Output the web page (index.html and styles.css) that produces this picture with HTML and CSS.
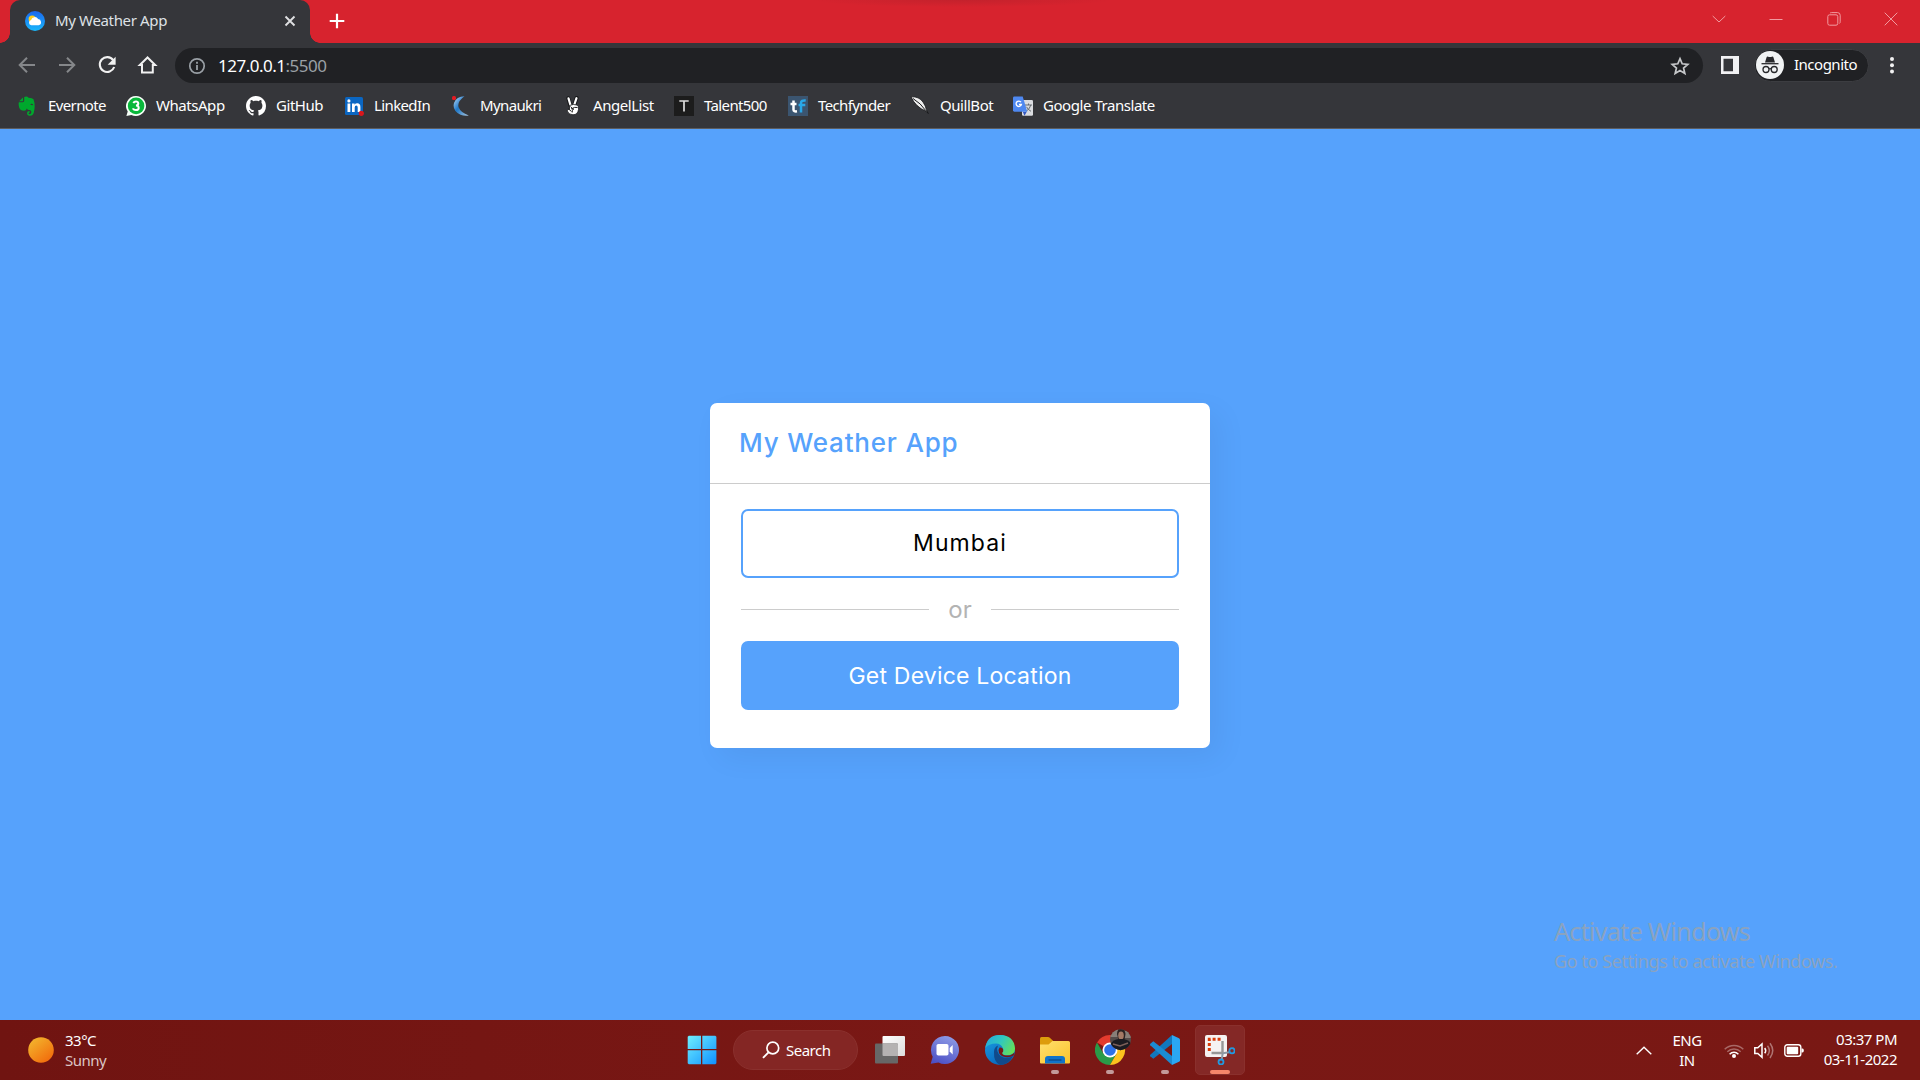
FILE: index.html
```html
<!DOCTYPE html>
<html lang="en">
<head>
<meta charset="utf-8">
<title>My Weather App</title>
<link rel="stylesheet" href="styles.css">
</head>
<body>
<div class="screen">
  <header class="browser">
    <div class="tabstrip">
      <div class="tab">
        <svg class="tab-icon" viewBox="0 0 20 20"><defs><linearGradient id="sky" x2="0" y2="1"><stop stop-color="#1b67ee"/><stop offset="1" stop-color="#19b8fb"/></linearGradient></defs><circle cx="10" cy="10" r="10" fill="url(#sky)"/><circle cx="7.200" cy="8" r="3.600" fill="#ffce1f"/><path d="M6.300 14.200a2.700 2.700 0 0 1-.2-5.300 3.800 3.800 0 0 1 7-.8 3.100 3.100 0 0 1 .6 6.100z" fill="#fff"/></svg>
        <span class="tab-title">My Weather App</span>
        <svg class="tab-close" viewBox="0 0 12 12"><path d="M1.500 1.500l9 9M10.500 1.500l-9 9" stroke="#dfe0e2" stroke-width="1.900"/></svg>
      </div>
      <svg class="new-tab" viewBox="0 0 16 16"><path d="M8 .7v14.600M.7 8h14.600" stroke="#fff" stroke-width="2.200"/></svg>
      <div class="window-controls">
        <svg viewBox="0 0 14 14"><path d="M.7 4l6.300 6 6.300-6"/></svg>
        <svg viewBox="0 0 14 14"><path d="M.5 7.500h13"/></svg>
        <svg viewBox="0 0 14 14"><rect x=".8" y="2.800" width="10" height="10.400" rx="1.800"/><path d="M3 1.200Q3.400.6 4.500.6H10.500Q13.200.6 13.200 3.300V9.800Q13.200 11 12.400 11.500"/></svg>
        <svg viewBox="0 0 14 14"><path d="M.7.7l12.600 12.600M13.300.7L.7 13.300"/></svg>
      </div>
    </div>
    <div class="toolbar">
      <div class="nav">
        <svg viewBox="0 0 24 24"><path d="M20 12H4.800M12 4.700L4.700 12l7.300 7.300" fill="none" stroke="#85878a" stroke-width="2"/></svg>
        <svg viewBox="0 0 24 24"><path d="M4 12h15.200M12 4.700l7.300 7.300-7.300 7.300" fill="none" stroke="#85878a" stroke-width="2"/></svg>
        <svg viewBox="0 0 24 24"><path d="M18.200 7.200A7.400 7.400 0 1 0 19.200 14" fill="none" stroke="#f1f1f1" stroke-width="2.100"/><path d="M20.600 3.800v8h-8z" fill="#f1f1f1"/></svg>
        <svg viewBox="0 0 24 24"><path d="M12.500 4.500l-7.700 7.500h2.200v7.500h10.800v-7.500h2.400z" fill="none" stroke="#f1f1f1" stroke-width="2"/></svg>
      </div>
      <div class="omnibox">
        <svg class="info" viewBox="0 0 18 18"><circle cx="9" cy="9" r="7.200" fill="none" stroke="#9aa0a6" stroke-width="1.700"/><path d="M9 8v5M9 4.700v2" stroke="#9aa0a6" stroke-width="1.800"/></svg>
        <span class="url"><span class="host">127.0.0.1</span><span class="port">:5500</span></span>
        <svg class="star" viewBox="0 0 20 20"><path d="M10 2.600l2.200 5.200 5.600.500-4.250 3.700 1.300 5.500L10 14.600l-4.850 2.900 1.300-5.500L2.200 8.300l5.600-.500z" fill="none" stroke="#c6c8ca" stroke-width="1.700"/></svg>
      </div>
      <svg class="panel" viewBox="0 0 18 18"><path fill-rule="evenodd" d="M0 0h18v18H0zM2.500 2.700v12.600h9.500V2.700z" fill="#f1f1f3"/></svg>
      <div class="profile">
        <svg class="spy" viewBox="0 0 28 28"><circle cx="14" cy="14" r="14" fill="#f1f3f4"/><path d="M9 11.500l1.500-5q.4-1.200 1.600-.8 1.900.6 3.800 0 1.200-.4 1.600.8l1.500 5z" fill="#28292c"/><path d="M5.500 12.700h17" stroke="#28292c" stroke-width="1.300"/><g fill="none" stroke="#28292c" stroke-width="1.300"><circle cx="10" cy="18.500" r="3"/><circle cx="18.200" cy="18.500" r="3"/><path d="M13 18q1.100-.8 2.200 0"/></g></svg>
        <span class="profile-name">Incognito</span>
      </div>
      <svg class="menu" viewBox="0 0 6 18"><g fill="#f1f1f1"><circle cx="3" cy="3" r="2"/><circle cx="3" cy="9.200" r="2"/><circle cx="3" cy="15.400" r="2"/></g></svg>
    </div>
    <nav class="bookmarks">
      <a class="bookmark"><svg viewBox="0 0 20 20"><path d="M5 1.500v3.200q0 .6-.6.600H1.200zM6.200 1q2.800-1.200 4.300.8 4 .1 5 1.500 1.600 4.500 1 9.500-.4 4.500-2 6.200-1 1-3.300.8-2.200-.3-2.200-2.600t2.500-2.300v1.800q-1 .1-1 .8t1.300.7q1.700-.2 1.600-2.500-.2-1.500-2-1.600-2-.2-2.600-1.700-.5 2.300-2.700 2.300-4 0-5-3.500Q.4 8.500.8 6.300h4q1.400-.1 1.400-1.500z" fill="#00a82d"/><path d="M12.400 9q.3-1.500 1.500-1.300 1.100.1 1.400 1.600-1.500-.4-2.900-.3z" fill="#35363a"/></svg><span class="tight">Evernote</span></a>
      <a class="bookmark"><svg viewBox="0 0 20 20"><path d="M10 0a10 10 0 1 1-4.600 18.900L.4 20l1.300-4.500A10 10 0 0 1 10 0z" fill="#f5fff7"/><circle cx="10.100" cy="9.900" r="8.300" fill="#09b83b"/><path d="M7.400 7.200q.6-1.600 2.600-1.600t2.300 1.900q0 1.900-2.300 2.100 2.700.1 2.700 2.300 0 2.100-2.700 2.100t-2.800-1.800" fill="none" stroke="#fff" stroke-width="2"/></svg><span>WhatsApp</span></a>
      <a class="bookmark"><svg viewBox="0 0 16 16"><path d="M8 0C3.580 0 0 3.580 0 8c0 3.540 2.290 6.530 5.470 7.590.4.070.55-.17.55-.38 0-.19-.01-.82-.01-1.490-2.010.37-2.530-.49-2.690-.94-.09-.23-.48-.94-.82-1.130-.28-.15-.68-.52-.01-.53.63-.01 1.080.58 1.230.82.72 1.210 1.870.87 2.330.66.070-.52.28-.87.51-1.070-1.780-.2-3.640-.89-3.640-3.950 0-.87.31-1.590.82-2.150-.08-.2-.36-1.020.08-2.120 0 0 .67-.21 2.200.82.64-.18 1.320-.27 2-.27s1.360.09 2 .27c1.530-1.040 2.200-.82 2.200-.82.44 1.100.16 1.920.08 2.120.51.56.82 1.270.82 2.150 0 3.070-1.870 3.750-3.650 3.950.29.25.54.73.54 1.480 0 1.070-.01 1.930-.01 2.200 0 .21.15.46.55.38A8.010 8.010 0 0 0 16 8c0-4.420-3.580-8-8-8z" fill="#fff"/></svg><span>GitHub</span></a>
      <a class="bookmark"><svg viewBox="0 0 20 20"><rect x="1" y="1" width="18" height="18" rx="1.500" fill="#0a66c2"/><g fill="#fff"><rect x="3.500" y="7.500" width="2.800" height="8.500"/><circle cx="4.900" cy="4.900" r="1.600"/><path d="M8 7.500h2.600v1.200q.8-1.400 2.700-1.400 3.100 0 3.100 3.700v5h-2.700v-4.600q0-1.900-1.400-1.900-1.600 0-1.600 2V16H8z"/></g><circle cx="17.300" cy="17.300" r="2.600" fill="#d9161c"/></svg><span class="tight">LinkedIn</span></a>
      <a class="bookmark"><svg viewBox="0 0 20 20"><defs><linearGradient id="nk" x2="1" y2="1"><stop offset=".1" stop-color="#9cc8ef"/><stop offset=".45" stop-color="#1f78c8"/><stop offset="1" stop-color="#a8c5dd"/></linearGradient></defs><path d="M14.500.3Q6.500.3 4 7 2 14.500 10.500 18.800 14.500 20.300 18.800 19.500 10.500 16.500 8.500 11 7.200 5.500 14.500.3z" fill="url(#nk)"/><rect x="2" y="0" width="4" height="4" rx="1.500" fill="#e31b23"/></svg><span class="tight">Mynaukri</span></a>
      <a class="bookmark"><svg viewBox="0 0 20 20"><path d="M7.300 9.500L5.300 2.300M11.200 9L13.600 2" stroke="#17181a" stroke-width="4" stroke-linecap="round"/><path d="M7.600 9.500L5.500 2.400M11.200 9L13.500 2.200" stroke="#fff" stroke-width="2.200" stroke-linecap="round"/><path d="M6.500 9.500q4-1.800 7.300-.5 2.300 1 1.700 4.500-.8 5.300-5.500 5.300-4.500 0-5.700-3.800-.6-2.300 2.200-1.500z" fill="#fff" stroke="#17181a" stroke-width=".8"/><path d="M5 12.500l3.500 3M7.500 10.500l3 3.300M8 13q4-2.500 6.500-1.500M10.500 12.500q-1.500 1.500-1.300 4" stroke="#222" stroke-width="1" fill="none"/></svg><span>AngelList</span></a>
      <a class="bookmark"><svg viewBox="0 0 20 20"><rect width="20" height="20" fill="#1c1c1c"/><path d="M5.300 5h9.400M10 5v10.500" stroke="#ddd" stroke-width="1.700"/></svg><span class="tight">Talent500</span></a>
      <a class="bookmark"><svg viewBox="0 0 20 20"><rect width="20" height="20" fill="#3b5570"/><path d="M5.500 4.500v9.300q0 2 3.500 1.500M2.500 8h6" stroke="#fff" stroke-width="2.500" fill="none"/><path d="M13 16.500V7q0-3 4.700-2.500M10.500 9h6.800" stroke="#29a8e8" stroke-width="2.500" fill="none"/></svg><span class="tight">Techfynder</span></a>
      <a class="bookmark"><svg viewBox="0 0 20 20"><path d="M1 .8q8-.5 12 5.200 3 4.500 3.300 7.500l1.900 4-2.300-2.400Q5.500 11 1 .8z" fill="#eee" stroke="#17181a" stroke-width=".8"/><path d="M3 2.500q8 5 12.700 12M16.500 14.500l1.600 3" stroke="#17181a" stroke-width="1" fill="none"/></svg><span>QuillBot</span></a>
      <a class="bookmark"><svg viewBox="0 0 20 20"><rect x="9" y="4" width="11" height="15.700" rx="1.200" fill="#dadce0"/><path d="M12 9h7M15.500 7.500V9M17.800 9q-.8 4-5 6.500M13.500 10.800q1.500 3 4.500 4.500" stroke="#646a70" stroke-width="1" fill="none"/><path d="M9.800 15.700h4l-2.300 4z" fill="#3457c0"/><path d="M1.400.5h8.300l4.600 15.200H1.400Q0 15.700 0 14.300V1.900Q0 .5 1.400.5z" fill="#4e88f0"/><path d="M8 6.200A2.700 2.700 0 1 0 8.400 8.500H6" stroke="#fff" stroke-width="1.300" fill="none"/></svg><span>Google Translate</span></a>
    </nav>
  </header>

  <main class="page">
    <section class="card">
      <h1 class="card-head">My Weather App</h1>
      <div class="card-body">
        <div class="city">Mumbai</div>
        <div class="divider"><span>or</span></div>
        <div class="locate">Get Device Location</div>
      </div>
    </section>
    <aside class="watermark">
      <p class="wm-title">Activate Windows</p>
      <p class="wm-text">Go to Settings to activate Windows.</p>
    </aside>
  </main>

  <footer class="taskbar">
    <div class="weather">
      <svg viewBox="0 0 26 26"><defs><linearGradient id="sun" x2=".8" y2="1"><stop stop-color="#f3bd31"/><stop offset="1" stop-color="#f26a0b"/></linearGradient></defs><circle cx="13" cy="13" r="12.800" fill="url(#sun)"/></svg>
      <div><div class="temp">33°C</div><div class="cond">Sunny</div></div>
    </div>
    <div class="apps">
      <div class="app start"><svg viewBox="0 0 30 30"><defs><linearGradient id="win" x2="1" y2="1"><stop stop-color="#6ff0ff"/><stop offset="1" stop-color="#0f8fff"/></linearGradient></defs><path d="M1.800.700H14V14H.700V1.800zM15.300.700H28.300l1.100 1.100V14H15.300zM.700 15.300H14v14H1.800L.700 28.300zM15.300 15.300H29.400v13l-1.100 1H15.300z" fill="url(#win)"/></svg></div>
      <div class="search"><svg viewBox="0 0 18 18"><circle cx="10.800" cy="7" r="5.900" fill="none" stroke="#fff" stroke-width="1.700"/><path d="M6.500 11.300L1 16.800" stroke="#fff" stroke-width="1.900"/></svg><span>Search</span></div>
      <div class="app"><svg viewBox="0 0 30 30"><defs><linearGradient id="tv" x2="1" y2="1"><stop stop-color="#fff"/><stop offset="1" stop-color="#dcdcdc"/></linearGradient></defs><rect x="7.500" y="1" width="22.500" height="20" rx="1" fill="url(#tv)"/><rect y="8.500" width="23" height="20" rx="1" fill="#676767"/><path d="M7.500 8.500H22q1 0 1 1V21H8.500q-1 0-1-1z" fill="#b4b2b2"/></svg></div>
      <div class="app"><svg viewBox="0 0 30 30"><defs><linearGradient id="ch" x1=".7" x2=".3" y2="1"><stop stop-color="#8d9be6"/><stop offset="1" stop-color="#4d50c5"/></linearGradient></defs><path d="M15 1a14 14 0 1 1-6.500 26.400L.7 28.800l2-7A14 14 0 0 1 15 1z" fill="url(#ch)"/><rect x="6.500" y="9" width="12" height="11.500" rx="1.800" fill="#fff"/><path d="M19.700 13l3-3v9.500l-3-3z" fill="#fff"/></svg></div>
      <div class="app"><svg viewBox="0 0 30 30"><defs><linearGradient id="e1" y1=".2" x2="1" y2=".6"><stop stop-color="#25a9dd"/><stop offset=".5" stop-color="#31c8bd"/><stop offset="1" stop-color="#65df5a"/></linearGradient><linearGradient id="e2" x2=".6" y2="1"><stop stop-color="#1ba0e4"/><stop offset="1" stop-color="#0964bb"/></linearGradient></defs><circle cx="15" cy="15" r="15" fill="url(#e2)"/><path d="M.300 13Q2 0 15 0q14 .5 15 13.300.2 6.700-7.500 7-6 .1-6-2.200 2.500-1.800 1.300-5Q16 8.700 11 8.600 3.500 8.800.300 13z" fill="url(#e1)"/><path d="M9 17q0-5 4-6.500-1.500 3-.5 6 2 6.500 9 6.500 3.500 0 6.500-2-4.500 9-13 9Q8.500 27 9 17z" fill="#114a8b"/><path d="M28.600 20.500q-3 2-7 1.800-5.600-.5-7.600-4.300-1.200-3.200.6-5.500 2.800-.5 3.600 2 .5 2-1.100 3.500 1 2.700 5.400 2.600 4.500-.2 6.800-3.200 0 1.700-.7 3.100z" fill="#781715"/></svg></div>
      <div class="app running"><svg viewBox="0 0 30 30"><defs><linearGradient id="fo" x2="1" y2="1"><stop stop-color="#ffdf6e"/><stop offset="1" stop-color="#fbc42c"/></linearGradient></defs><path d="M0 3.500Q0 2 1.500 2H8q1 0 1.800.7l3.500 3.300v4H0z" fill="#dd9c0c"/><path d="M0 9.500h8.500l4-3.500h16Q30 6 30 7.500V27.500q0 1-1 1H1q-1 0-1-1z" fill="url(#fo)"/><path d="M5 28.500v-4.500q0-3 3-3h14q3 0 3 3v4.500z" fill="#1173c9"/><path d="M9 25h12" stroke="#0c4f91" stroke-width="1.300" stroke-linecap="round"/></svg></div>
      <div class="app running"><svg class="chrome" viewBox="0 0 36 36"><path d="M15 21L2 13.500A15 15 0 0 1 28 13.500H15z" fill="#e33b2e"/><path d="M15 21l6.500 3.700L15 36A15 15 0 0 1 2 13.500L8.500 24.800z" fill="#2a9b48"/><path d="M15 21V13.500H28A15 15 0 0 1 15 36l6.500-11.300z" fill="#fcc31e"/><circle cx="15" cy="21" r="7.500" fill="#fff"/><circle cx="15" cy="21" r="5.800" fill="#2d72e8"/><clipPath id="face"><circle cx="25.500" cy="10.700" r="10.500"/></clipPath><g clip-path="url(#face)"><path d="M15 0h21v22H15z" fill="#544b49"/><path d="M15 0h8v8h-8zM29 2h8v7h-8z" fill="#887e78"/><path d="M22 5q0-5 4-5t4.500 5l-1 6h-6z" fill="#2b2222"/><ellipse cx="26" cy="6.500" rx="2.800" ry="4" fill="#a57965"/><path d="M15 16q3-6 9-6h4q7 1 8 5v8H15z" fill="#1b1b21"/><path d="M18 15l7 2 8-3" stroke="#7b5f58" stroke-width="1.500" fill="none"/></g></svg></div>
      <div class="app running"><svg viewBox="0 0 30 30"><path d="M22 0v9L3.300 23.800.3 21.200q-.6-.7 0-1.400z" fill="#1277bd"/><path d="M22 30v-9L3.300 6.300.3 8.800q-.6.700 0 1.400z" fill="#1b8bd2"/><path d="M22 0l7 3.200q1 .5 1 1.600v20.400q0 1.100-1 1.600L22 30z" fill="#2aa7f3"/></svg></div>
      <div class="app running active"><svg viewBox="0 0 30 30"><rect width="22" height="22" rx="2" fill="#f5f2f2"/><path d="M4.300 16V4.300H16" fill="none" stroke="#d83b0a" stroke-width="3" stroke-dasharray="3 2"/><path d="M17.500 6v12.500M6.500 18h12" stroke="#979797" stroke-width="2.400"/><path d="M17.700 18.300l6.500-1M17.700 18.300l-1 6" stroke="#8c9aa5" stroke-width="2"/><circle cx="27" cy="15.800" r="2.600" fill="none" stroke="#2299e0" stroke-width="1.800"/><circle cx="16" cy="27" r="2.500" fill="none" stroke="#2299e0" stroke-width="1.800"/></svg></div>
    </div>
    <div class="tray">
      <svg class="up" viewBox="0 0 16 9"><path d="M.7 8.300L8 1.200l7.300 7.100" fill="none" stroke="#fff" stroke-width="1.400"/></svg>
      <div class="lang"><div>ENG</div><div>IN</div></div>
      <svg class="wifi" viewBox="0 0 20 16"><g fill="none" stroke="#fff" stroke-width="1.500"><path d="M.7 7.300a13 13 0 0 1 18.600 0M3.300 9.800a9.500 9.500 0 0 1 13.400 0" opacity=".35"/><path d="M5.600 12.200a6.200 6.200 0 0 1 8.800 0"/></g><circle cx="10" cy="14" r="2" fill="#fff"/></svg>
      <svg class="volume" viewBox="0 0 20 17"><g fill="none" stroke="#fff" stroke-width="1.500"><path d="M.8 5.800h3L8 2v13.300l-4.200-3.800h-3zM10.700 6q2 2.600 0 5.300"/><path d="M13.500 3.700q3.800 4.900 0 9.800M16 1.200q5.500 7.400 0 14.800" opacity=".4"/></g></svg>
      <svg class="battery" viewBox="0 0 20 13"><rect x=".8" y=".8" width="16" height="11.400" rx="2.500" fill="none" stroke="#fff" stroke-width="1.400"/><rect x="2.700" y="2.700" width="11.500" height="7.600" rx="1" fill="#fff"/><path d="M17.500 4.500h1q1.300 0 1.300 2t-1.300 2h-1z" fill="#fff"/></svg>
      <div class="clock"><div>03:37 PM</div><div>03-11-2022</div></div>
    </div>
  </footer>
</div>
</body>
</html>
```
FILE: styles.css
```css
* { box-sizing: border-box; }
body { margin: 0; font-family: "Noto Sans", sans-serif; }
svg { display: block; flex: none; }
.screen { width: 1920px; height: 1080px; display: flex; flex-direction: column; overflow: hidden; }

/* Browser window */
.browser { height: 129px; background: #35363a; border-bottom: 1px solid #5c5d60; color: #fff; flex: none; }
.tabstrip { height: 43px; display: flex; align-items: center; background: radial-gradient(ellipse 150px 7px at 962px 0, rgba(150, 30, 40, .3), transparent), #d7232e; padding-left: 10px; }
.tab { position: relative; width: 300px; height: 43px; display: flex; align-items: center; padding: 0 14px 2px 15px; background: #35363a; border-radius: 10px 10px 0 0; }
.tab::before, .tab::after { content: ""; position: absolute; bottom: 0; width: 10px; height: 10px; }
.tab::before { left: -10px; background: radial-gradient(circle at 0 0, #d7232e 9.5px, #35363a 10px); }
.tab::after { right: -10px; background: radial-gradient(circle at 100% 0, #d7232e 9.5px, #35363a 10px); }
.tab-icon { width: 20px; height: 20px; margin-right: 10px; }
.tab-title { font-size: 15px; letter-spacing: -.35px; color: #dee1e6; flex: 1; padding-bottom: 1px; }
.tab-close { width: 12px; height: 12px; }
.new-tab { width: 16px; height: 16px; margin: 0 0 1px 19px; }
.window-controls { margin-left: auto; display: flex; gap: 43.300px; padding: 0 22px 6px 0; }
.window-controls svg { width: 14px; height: 14px; fill: none; stroke: #f19ba0; stroke-width: 1; }

.toolbar { height: 45px; display: flex; align-items: center; }
.nav { display: flex; gap: 16px; padding: 0 15px 1px; width: 175px; }
.nav svg { width: 24px; height: 24px; }
.omnibox { width: 1528px; height: 35px; border-radius: 18px; background: #202124; display: flex; align-items: center; padding: 0 13px; }
.info { width: 18px; height: 18px; margin-right: 12px; }
.url { flex: 1; font-size: 17px; letter-spacing: -.5px; display: flex; }
.port { color: #9aa0a6; }
.star { width: 20px; height: 20px; }
.panel { width: 18px; height: 18px; margin: 0 15px 1px 18px; }
.profile { width: 115px; height: 33px; border: 1px solid #3c3d41; border-radius: 17px; background: #202124; display: flex; align-items: center; gap: 10px; padding-left: 1px; margin-bottom: 1px; font-size: 15px; letter-spacing: -.5px; }
.profile-name { padding-bottom: 2px; }
.spy { width: 28px; height: 28px; }
.menu { width: 6px; height: 18px; margin: 0 0 1px 20px; }

.bookmarks { display: grid; grid-template-columns: 108px 120px 98px 106px 113px 111px 114px 122px 103px auto; padding: 5px 0 0 18px; }
.bookmark { height: 26px; display: flex; align-items: center; gap: 10px; font-size: 15px; letter-spacing: -.45px; white-space: nowrap; }
.bookmark span { padding-bottom: 2px; }
.bookmark .tight { letter-spacing: -.62px; }
.bookmark svg { width: 20px; height: 20px; }

/* Weather page */
.page { height: 891px; background: #56a2fc; display: flex; flex-direction: column; align-items: center; position: relative; padding-top: 274px; }
.card { width: 500px; height: 345px; background: #fff; border-radius: 7px; box-shadow: 10px 10px 30px rgba(0, 0, 0, .05); font-family: Inter, sans-serif; }
.card-head { margin: 0; height: 81px; border-bottom: 1px solid #ccc; padding: 0 29px 1px; display: flex; align-items: center; color: #56a2fc; font-size: 26px; font-weight: 500; letter-spacing: .8px; }
.card-body { padding: 25px 31px; }
.city, .locate { height: 69px; display: flex; align-items: center; justify-content: center; border-radius: 7px; font-size: 23px; }
.city { border: 2px solid #56a2fc; color: #000; letter-spacing: 1.100px; padding-bottom: 1px; }
.locate { background: #56a2fc; color: #fff; letter-spacing: .2px; }
.divider { height: 63px; display: flex; align-items: center; color: #b3b3b3; font-size: 24px; }
.divider::before, .divider::after { content: ""; flex: 1; height: 1px; background: #ccc; }
.divider span { width: 62px; text-align: center; }
.watermark { position: absolute; left: 1554px; top: 786px; color: #8ba3bf; white-space: nowrap; }
.watermark p { margin: 0; }
.wm-title { font-size: 25px; line-height: 32px; letter-spacing: -.65px; }
.wm-text { font-size: 18px; line-height: 28px; letter-spacing: -.42px; }

/* Desktop taskbar */
.taskbar { height: 60px; background: linear-gradient(90deg, #701411, #7a1815 50%, #791814); color: #fff; display: grid; grid-template-columns: 677px 1fr 284px; font-size: 15px; line-height: 20px; letter-spacing: -.5px; }
.weather { display: flex; align-items: center; gap: 11px; padding-left: 28px; }
.weather svg { width: 26px; height: 26px; }
.cond { color: #dcc4c4; }
.apps { display: flex; align-items: center; gap: 5px; }
.app { position: relative; width: 50px; height: 50px; display: flex; align-items: center; justify-content: center; border-radius: 5px; }
.app svg { width: 30px; height: 30px; }
.app .chrome { width: 36px; height: 36px; margin: 0 -6px 6px 0; }
.search { width: 125px; height: 40px; margin: 0 2px 0 1px; border-radius: 20px; background: #842624; border: 1px solid #8a302d; display: flex; align-items: center; gap: 6px; padding-left: 28px; }
.search svg { width: 18px; height: 18px; }
.running::after { content: ""; position: absolute; bottom: 1px; width: 8px; height: 4px; border-radius: 2px; background: #c39a9a; }
.active { background: #842826; border: 1px solid #8a302d; }
.active::after { width: 20px; bottom: 0; background: #f6866a; }
.tray { display: flex; align-items: center; }
.up { width: 16px; height: 9px; margin-right: 20px; }
.lang { width: 30px; text-align: center; margin-right: 22px; }
.wifi { width: 20px; height: 16px; margin-right: 10px; }
.volume { width: 20px; height: 17px; margin-right: 10px; }
.battery { width: 20px; height: 13px; }
.clock { width: 93px; text-align: right; padding-bottom: 2px; }
```
